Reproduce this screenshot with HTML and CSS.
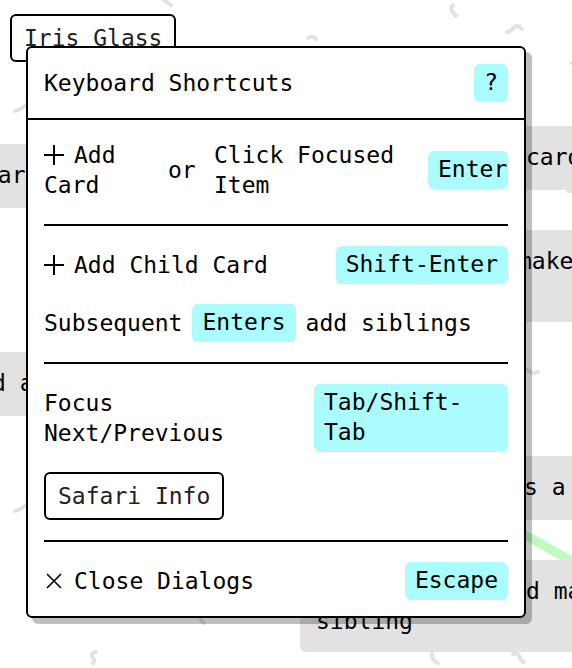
FILE: index.html
```html
<!DOCTYPE html>
<html lang="en">
<head>
<meta charset="utf-8">
<title>Keyboard Shortcuts</title>
<link rel="stylesheet" href="styles.css">
</head>
<body>
<main class="space">
  <div class="canvas">
    <svg class="doodles" width="572" height="668" viewBox="0 0 572 668" aria-hidden="true">
      <g class="squiggles">
        <path d="M162 -2q2 3 5 4l4 3"/>
        <path d="M453 5q-3 2-1 6l4 5"/>
        <path d="M507 32c6 0 5-6 10-6 3 0 3 2 5 3"/>
        <path d="M308 38q5-3 8 1"/>
        <path d="M572 63l4-2"/>
        <path d="M15 111c6 0 6-4 12-6"/>
        <path d="M568 191l5 0"/>
        <path d="M525 370c5-1 6 6 13 2"/>
        <path d="M15 511c6 0 6-4 12-6"/>
        <path d="M201 616q-1 5 3 7"/>
        <path d="M96 652c-6 1-4 4-3 6 2 2 1 4 0 5"/>
        <path d="M432 652q-1 8 6 11"/>
        <path d="M513 654c8-3 5 7 11 8"/>
      </g>
      <path class="connection" d="M500 521L600 577"/>
    </svg>
    <article class="card card-a">card</article>
    <article class="card card-b">d a</article>
    <article class="card card-c">card</article>
    <article class="card card-d">make</article>
    <article class="card card-e">s a c</article>
    <article class="card card-f"><span class="line-end">d ma</span><span>sibling</span></article>
  </div>

  <header class="top">
    <button class="button" type="button">Iris Glass</button>
  </header>

  <section class="dialog" role="dialog" aria-labelledby="title">
    <header class="row dialog-header">
      <h1 class="title" id="title">Keyboard Shortcuts</h1>
      <kbd class="key">?</kbd>
    </header>
    <div class="content">
      <section class="group group-actions">
        <span><svg class="icon" viewBox="0 0 20 20" aria-hidden="true"><path d="M10 0v20M0 10h20"/></svg>Add Card</span>
        <span>or</span>
        <span>Click Focused Item</span>
        <kbd class="key key-clipped">Enter</kbd>
      </section>
      <section class="group">
        <div class="row">
          <span><svg class="icon" viewBox="0 0 20 20" aria-hidden="true"><path d="M10 0v20M0 10h20"/></svg>Add Child Card</span>
          <kbd class="key">Shift-Enter</kbd>
        </div>
        <div class="phrase">
          <span>Subsequent</span>
          <kbd class="key">Enters</kbd>
          <span>add siblings</span>
        </div>
      </section>
      <section class="group">
        <div class="row">
          <span>Focus Next/Previous</span>
          <kbd class="key key-wide">Tab/Shift-Tab</kbd>
        </div>
        <div>
          <button class="button" type="button">Safari Info</button>
        </div>
      </section>
      <section class="group">
        <div class="row">
          <span><svg class="icon icon-close" viewBox="0 0 20 20" aria-hidden="true"><path d="M3 3l14 14M17 3L3 17"/></svg>Close Dialogs</span>
          <kbd class="key">Escape</kbd>
        </div>
      </section>
    </div>
  </section>
</main>
</body>
</html>
```

FILE: styles.css
```css
* {
  box-sizing: border-box;
}

body {
  margin: 0;
  background: #fff;
  color: #000;
  font-family: "DejaVu Sans Mono", monospace;
  font-size: 23px;
  line-height: 30px;
}

.space {
  position: relative;
  min-height: 100vh;
  overflow: hidden;
}

/* Free canvas behind the interface */
.canvas {
  position: absolute;
  inset: 0;
  overflow: hidden;
}

.doodles {
  position: absolute;
  left: 0;
  top: 0;
  fill: none;
}

.squiggles {
  stroke: #e2e2e2;
  stroke-width: 4;
  stroke-linecap: round;
  stroke-linejoin: round;
}

.connection {
  stroke: #bffbbf;
  stroke-width: 9;
}

.card {
  position: absolute;
  display: flex;
  flex-direction: column;
  padding: 16px 16px 18px;
  border-radius: 6px;
  background: #e2e2e2;
  white-space: nowrap;
}

.card-a { left: -32px; top: 144px; }
.card-b { left: -24px; top: 352px; }
.card-c { left: 510px; top: 126px; }
.card-d { left: 502px; top: 230px; padding-bottom: 46px; }
.card-e { left: 508px; top: 456px; }
.card-f { left: 300px; top: 560px; padding-bottom: 16px; }

.line-end {
  margin-left: 210px;
}

.top {
  position: relative;
  padding: 14px 10px;
}

.button {
  display: block;
  padding: 7px 12px;
  border: 2px solid #000;
  border-radius: 6px;
  background: #fff;
  color: #222;
  font: inherit;
}

.dialog {
  position: absolute;
  top: 46px;
  left: 26px;
  right: 46px;
  border: 2px solid #000;
  border-radius: 6px;
  background: #fff;
  box-shadow: 6px 6px 0 rgba(0, 0, 0, 0.25);
}

.row {
  display: flex;
  align-items: center;
  justify-content: space-between;
  gap: 18px;
}

.dialog-header {
  padding: 16px;
  border-bottom: 2px solid #000;
}

.title {
  margin: 0;
  font-size: 23px;
  font-weight: 400;
}

.content {
  padding: 0 16px;
}

.group {
  display: flex;
  flex-direction: column;
  gap: 20px;
  padding: 20px 0;
}

.group + .group {
  border-top: 2px solid #000;
}

.group:last-child {
  padding-bottom: 16px;
}

.group-actions {
  display: grid;
  grid-template-columns: 106px 28px 1fr 80px;
  align-items: center;
  gap: 18px;
  padding-bottom: 24px;
}

.phrase {
  display: flex;
  align-items: center;
  gap: 10px;
}

.key {
  padding: 3px 10px 5px;
  border-radius: 6px;
  background: #aafcff;
  font: inherit;
}

.key-clipped {
  overflow: hidden;
  padding-right: 0;
}

.key-wide {
  flex: 0 0 194px;
}

.icon {
  width: 20px;
  height: 20px;
  margin-right: 10px;
  vertical-align: -2px;
  fill: none;
  stroke: #000;
  stroke-width: 2;
}

.icon-close {
  stroke-width: 1.6;
}
```
